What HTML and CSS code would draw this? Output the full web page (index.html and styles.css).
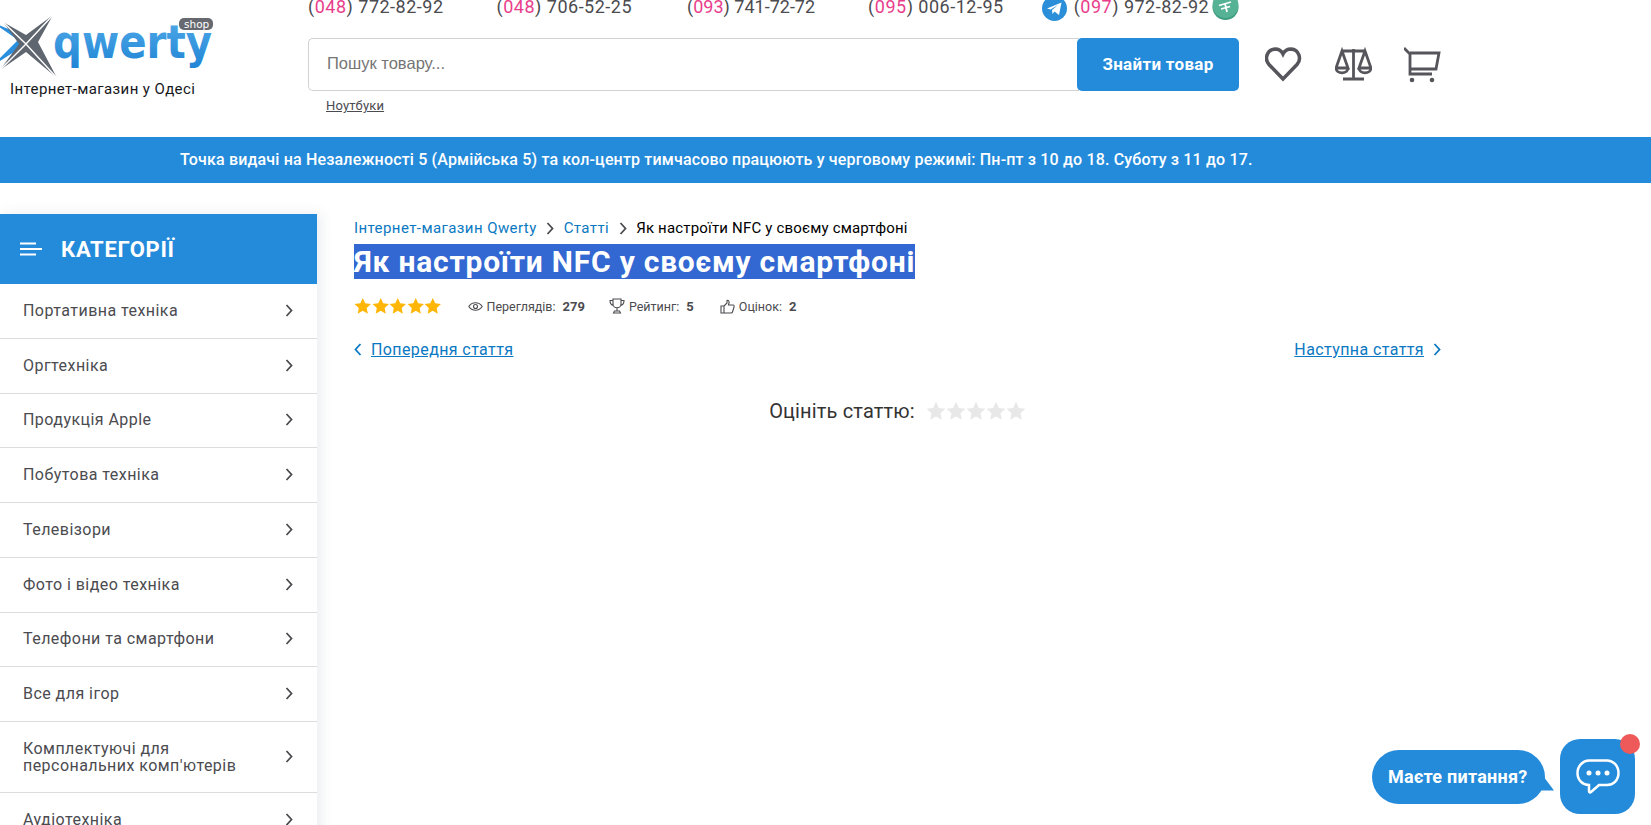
FILE: index.html
```html
<!DOCTYPE html>
<html lang="uk">

	<head>
		<meta charset="UTF-8" />
		<meta name="viewport" content="width=device-width, initial-scale=1.0" />
		<title>Як настроїти NFC у своєму смартфоні</title>
		<link rel="stylesheet" href="styles.css">
	</head>

	<body>
		<svg class="defs" width="0" height="0">
			<defs>
				<linearGradient id="logoBlue" x1="0" y1="0" x2="0" y2="1">
					<stop offset="0" stop-color="#55ace9" />
					<stop offset="1" stop-color="#1f85d5" />
				</linearGradient>
				<path id="star" d="M10 .8l2.8 6.1 6.6.8-4.9 4.5 1.3 6.6L10 15.5l-5.8 3.3 1.3-6.6L.6 7.7l6.6-.8z" />
				<path id="chev" d="M1.5 1l5 5.5-5 5.5" />
			</defs>
		</svg>

		<header class="header">
			<div class="logo">
				<svg class="logo-img" width="222" height="80" viewBox="0 0 222 80">
					<path d="M-8 22L18 40 -8 66 14 52 27 44 20 34z" fill="#2a8fdc" />
					<path d="M3 22L26 35 53 15 38 42 57 78 26 52 0 70 19 44z" fill="#5f6670" />
					<path d="M3 22L26 44 53 15M0 70L26 44 57 78" fill="none" stroke="#fff" stroke-width="1.5" />
					<text x="53" y="58" class="logo-word" fill="url(#logoBlue)" textLength="159" lengthAdjust="spacingAndGlyphs">qwerty</text>
					<rect x="179" y="18" width="34" height="12" rx="5" fill="#666a70" />
					<text x="184" y="27.500" class="logo-shop">shop</text>
				</svg>
				<div class="logo-sub">Інтернет-магазин у Одесі</div>
			</div>

			<div class="header-main">
				<div class="phones">
					<a class="phone">(<b>048</b>) 772-82-92</a>
					<a class="phone">(<b>048</b>) 706-52-25</a>
					<a class="phone phone-narrow">(<b>093</b>) 741-72-72</a>
					<a class="phone">(<b>095</b>) 006-12-95</a>
					<span class="phone-last">
						<svg class="tg" width="25" height="25" viewBox="0 0 25 25">
							<circle cx="12.500" cy="12.500" r="12.500" fill="#2a8fd8" />
							<path d="M5 12.500L19.500 6.500 17 19 12.500 15.500 10.500 18 10 14 16 9 8.500 13.500z" fill="#fff" />
						</svg>
						<a class="phone">(<b>097</b>) 972-82-92</a>
						<svg class="coin" width="27" height="20" viewBox="0 0 27 20">
							<circle cx="13.500" cy="7" r="13" fill="#3f9c80" />
							<circle cx="13.500" cy="5" r="13" fill="#55b295" />
							<path d="M7 5.500l12-3.500M13 3.500l2 8.500M9 9l9-2.500" stroke="#fff" stroke-width="1.800" fill="none" />
						</svg>
					</span>
				</div>

				<div class="search-row">
					<form class="search">
						<input class="search-input" type="text" placeholder="Пошук товару...">
						<button class="search-btn" type="button">Знайти товар</button>
					</form>
					<div class="tools">
						<svg width="37" height="37" viewBox="0 0 37 37" class="tool">
							<path d="M18 33L4 18.500C-1 13 2 3.500 10 3c3.500 0 6.500 2 8 5 1.500-3 4.500-5 8-5 8 .5 11 10 6 15.500z" />
						</svg>
						<svg width="37" height="37" viewBox="0 0 37 37" class="tool thin">
							<path d="M18.500 3v30M8 33h21M7 5h23M7 5L1 22h12zM30 5l-6 17h12z" />
							<path d="M1 22c.5 6.500 11.500 6.500 12 0M24 22c.5 6.500 11.500 6.500 12 0" />
						</svg>
						<svg width="37" height="37" viewBox="0 0 37 37" class="tool thin">
							<path d="M0 2l6 6v20h22" />
							<path d="M6 7h29l-3 16H6" />
							<circle cx="8" cy="34" r="2.300" class="dot" />
							<circle cx="28" cy="34" r="2.300" class="dot" />
						</svg>
					</div>
				</div>
				<a class="search-tag">Ноутбуки</a>
			</div>
		</header>

		<div class="notice">Точка видачі на Незалежності 5 (Армійська 5) та кол-центр тимчасово працюють у черговому режимі: Пн-пт з 10 до 18. Суботу з 11 до 17.</div>

		<div class="page">
			<aside class="sidebar">
				<div class="cat-head">
					<svg width="22" height="14" viewBox="0 0 22 14">
						<path d="M0 1.500h16M0 7h22M0 12.500h16" stroke="#fff" stroke-width="2" />
					</svg>
					<span>КАТЕГОРІЇ</span>
				</div>
				<ul class="cat-list">
					<li>Портативна техніка<svg class="chev" width="8" height="13"><use href="#chev" /></svg></li>
					<li>Оргтехніка<svg class="chev" width="8" height="13"><use href="#chev" /></svg></li>
					<li>Продукція Apple<svg class="chev" width="8" height="13"><use href="#chev" /></svg></li>
					<li>Побутова техніка<svg class="chev" width="8" height="13"><use href="#chev" /></svg></li>
					<li>Телевізори<svg class="chev" width="8" height="13"><use href="#chev" /></svg></li>
					<li>Фото і відео техніка<svg class="chev" width="8" height="13"><use href="#chev" /></svg></li>
					<li>Телефони та смартфони<svg class="chev" width="8" height="13"><use href="#chev" /></svg></li>
					<li>Все для ігор<svg class="chev" width="8" height="13"><use href="#chev" /></svg></li>
					<li class="tall">Комплектуючі для<br>персональних комп'ютерів<svg class="chev" width="8" height="13"><use href="#chev" /></svg></li>
					<li>Аудіотехніка<svg class="chev" width="8" height="13"><use href="#chev" /></svg></li>
				</ul>
			</aside>

			<main class="content">
				<div class="crumbs">
					<a>Інтернет-магазин Qwerty</a>
					<svg class="chev" width="8" height="13"><use href="#chev" /></svg>
					<a>Статті</a>
					<svg class="chev" width="8" height="13"><use href="#chev" /></svg>
					<span>Як настроїти NFC у своєму смартфоні</span>
				</div>
				<h1 class="title"><span>Як настроїти NFC у своєму смартфоні</span></h1>

				<div class="meta">
					<div class="stars">
						<svg width="17.500" height="18" viewBox="0 0 20 20"><use href="#star" /></svg>
						<svg width="17.500" height="18" viewBox="0 0 20 20"><use href="#star" /></svg>
						<svg width="17.500" height="18" viewBox="0 0 20 20"><use href="#star" /></svg>
						<svg width="17.500" height="18" viewBox="0 0 20 20"><use href="#star" /></svg>
						<svg width="17.500" height="18" viewBox="0 0 20 20"><use href="#star" /></svg>
					</div>
					<div class="meta-item views">
						<svg width="15" height="15" viewBox="0 0 15 15" class="meta-ico">
							<path d="M.8 7.500C4 2.500 11 2.500 14.200 7.500 11 12.500 4 12.500.8 7.500z" />
							<circle cx="7.500" cy="7.500" r="2" />
						</svg>
						Переглядів: <b>279</b>
					</div>
					<div class="meta-item rating">
						<svg width="16" height="16" viewBox="0 0 16 16" class="meta-ico">
							<path d="M4 1h8v5c0 5-8 5-8 0zM4 2.500H1c0 3 1 4.500 3.500 5M12 2.500h3c0 3-1 4.500-3.500 5M8 10v3M4.500 15h7l-1-2h-5z" />
						</svg>
						Рейтинг: <b>5</b>
					</div>
					<div class="meta-item likes">
						<svg width="15" height="15" viewBox="0 0 15 15" class="meta-ico">
							<path d="M1 7h3v7H1zM4 7l3-3V1.500c1.500-.5 2.500 1 2 2.500L8.500 6H13c1 0 1.500 1 1 2l-1.500 5c-.2.7-.8 1-1.500 1H4" />
						</svg>
						Оцінок: <b>2</b>
					</div>
				</div>

				<div class="pager">
					<a class="pager-link"><svg class="chev flip" width="8" height="13"><use href="#chev" /></svg><u>Попередня стаття</u></a>
					<a class="pager-link"><u>Наступна стаття</u><svg class="chev" width="8" height="13"><use href="#chev" /></svg></a>
				</div>

				<div class="rate">
					Оцініть статтю:
					<div class="rate-stars">
						<svg width="20" height="20" viewBox="0 0 20 20"><use href="#star" /></svg>
						<svg width="20" height="20" viewBox="0 0 20 20"><use href="#star" /></svg>
						<svg width="20" height="20" viewBox="0 0 20 20"><use href="#star" /></svg>
						<svg width="20" height="20" viewBox="0 0 20 20"><use href="#star" /></svg>
						<svg width="20" height="20" viewBox="0 0 20 20"><use href="#star" /></svg>
					</div>
				</div>
			</main>
		</div>

		<div class="chat">
			<div class="chat-bubble">Маєте питання?</div>
			<div class="chat-btn">
				<svg width="44" height="36" viewBox="0 0 44 36">
					<path d="M13 1.500h18c6 0 11.500 5 11.500 12.500S37 26 31 26h-8l-8 7c-1 .8-2 .3-2-1v-6C6.500 26 1.500 21 1.500 14S7 1.500 13 1.500z" />
					<circle cx="13" cy="14" r="2.500" />
					<circle cx="22" cy="14" r="2.500" />
					<circle cx="31" cy="14" r="2.500" />
				</svg>
				<span class="chat-dot"></span>
			</div>
		</div>
	</body>

</html>
```

FILE: styles.css
```css
html,
body {
	height: 825px;
	overflow: hidden;
}

body {
	margin: 0;
	font-family: Roboto, "Liberation Sans", sans-serif;
	color: #4b4b50;
	background: #fff;
}

a {
	text-decoration: none;
}

.defs {
	display: block;
}

.header {
	display: flex;
	height: 137px;
}

.logo {
	width: 308px;
	flex: none;
}

.logo-img {
	display: block;
}

.logo-word {
	font: 700 47px "DejaVu Sans", sans-serif;
}

.logo-shop {
	font: 10.500px "DejaVu Sans", sans-serif;
	fill: #fff;
}

.logo-sub {
	margin: 0 0 0 10px;
	font-size: 15px;
	letter-spacing: .4px;
	color: #16181c;
}

.phones {
	display: flex;
	align-items: center;
	gap: 53px;
	height: 14px;
	line-height: 14px;
	font-size: 18px;
	letter-spacing: .5px;
}

.phone {
	color: #4b4b50;
}

.phone b {
	font-weight: 400;
	color: #e83e8c;
}

.phone-narrow {
	margin-left: 2px;
	letter-spacing: 0;
}

.phone-last {
	display: flex;
	align-items: center;
	gap: 7px;
	margin-left: -15px;
}

.tg {
	margin-top: 3px;
}

.coin {
	margin: 6px 0 0 -4px;
}

.search-row {
	display: flex;
	align-items: center;
	margin-top: 24px;
}

.search {
	display: flex;
	width: 931px;
	height: 53px;
}

.search-input {
	flex: 1;
	min-width: 0;
	padding: 0 18px 2px;
	border: 1px solid #d2d2d2;
	border-right: 0;
	border-radius: 5px 0 0 5px;
	font: 16.500px "Liberation Sans", sans-serif;
}

.search-input::placeholder {
	color: #757575;
}

.search-btn {
	width: 162px;
	padding: 0 0 2px;
	border: 0;
	border-radius: 5px;
	margin-left: -2px;
	background: #248bdb;
	color: #fff;
	font: 700 17px Roboto, sans-serif;
	letter-spacing: .3px;
}

.tools {
	display: flex;
	gap: 32.500px;
	margin: -1px 0 0 26px;
}

.tool {
	display: block;
	fill: none;
	stroke: #55555b;
	stroke-width: 3.500;
}

.tool.thin {
	stroke-width: 2.800;
}

.tool .dot {
	fill: #55555b;
	stroke: none;
}

.search-tag {
	display: block;
	margin: 7px 0 0 18px;
	font-size: 13px;
	letter-spacing: .15px;
	color: #4b4b50;
	text-decoration: underline;
}

.notice {
	height: 46px;
	padding-left: 180px;
	line-height: 46px;
	background: #248bdb;
	color: #fff;
	font-size: 16px;
	font-weight: 500;
	letter-spacing: .165px;
}

.page {
	display: flex;
	margin-top: 31px;
}

.sidebar {
	width: 317px;
	flex: none;
	box-shadow: 4px 0 12px rgba(60, 80, 120, .1);
}

.cat-head {
	display: flex;
	align-items: center;
	gap: 19px;
	height: 70px;
	padding-left: 20px;
	background: #248bdb;
	color: #fff;
	font-size: 22px;
	font-weight: 700;
	letter-spacing: .7px;
}

.cat-list {
	margin: 0;
	padding: 0 0 0;
	list-style: none;
}

.cat-list li {
	display: flex;
	position: relative;
	align-items: center;
	box-sizing: border-box;
	height: 54.750px;
	padding: 0 0 1px 23px;
	border-bottom: 1px solid #dcdcdc;
	font-size: 16px;
	letter-spacing: .45px;
	line-height: 17px;
}

.cat-list li.tall {
	height: 71px;
}

.cat-list .chev {
	position: absolute;
	right: 24px;
	top: 50%;
	margin-top: -7px;
}

.chev {
	fill: none;
	stroke: #4b4b50;
	stroke-width: 1.800;
	flex: none;
}

.content {
	width: 1087px;
	padding-left: 37px;
}

.crumbs {
	display: flex;
	align-items: center;
	gap: 9.500px;
	margin-top: 5px;
	font-size: 15px;
	letter-spacing: .18px;
	color: #000;
}

.crumbs a {
	color: #0a78c2;
	letter-spacing: .42px;
}

.title {
	margin: 7px 0 0;
	font-size: 30px;
	font-weight: 700;
	line-height: 36px;
	letter-spacing: .77px;
}

.title span {
	background: #3367d1;
	color: #fff;
}

.meta {
	display: flex;
	align-items: center;
	margin-top: 17px;
	font-size: 12.500px;
	height: 18px;
}

.stars {
	display: flex;
	fill: #ffb606;
}

.meta-item {
	display: flex;
	align-items: center;
	gap: 4px;
}

.meta-item b {
	margin-left: 3px;
	font-size: 13px;
}

.meta-ico {
	fill: none;
	stroke: #4b4b50;
	stroke-width: 1.100;
}

.views {
	margin-left: 26px;
}

.rating {
	margin-left: 24px;
}

.likes {
	margin-left: 26px;
}

.pager {
	display: flex;
	justify-content: space-between;
	margin-top: 25px;
	font-size: 16px;
	letter-spacing: .4px;
}

.pager-link {
	display: flex;
	align-items: center;
	gap: 9px;
	color: #0a78c2;
}

.pager-link .chev {
	stroke: #0a78c2;
}

.flip {
	transform: scaleX(-1);
}

.rate {
	display: flex;
	align-items: center;
	justify-content: center;
	gap: 11px;
	margin-top: 40px;
	font-size: 20px;
	letter-spacing: .15px;
	color: #333;
}

.rate-stars {
	display: flex;
	fill: #e8e8e8;
}

.chat {
	position: fixed;
	left: 1372px;
	top: 739px;
	display: flex;
	align-items: center;
}

.chat-bubble {
	position: relative;
	box-sizing: border-box;
	width: 173px;
	height: 54px;
	padding-left: 16px;
	border-radius: 27px;
	background: #248bdb;
	color: #fff;
	font-size: 18px;
	font-weight: 700;
	letter-spacing: .25px;
	line-height: 54px;
}

.chat-bubble::after {
	content: "";
	position: absolute;
	left: 158px;
	bottom: 13px;
	width: 24px;
	height: 32px;
	background: #248bdb;
	clip-path: polygon(0 0, 100% 100%, 0 100%);
}

.chat-btn {
	position: relative;
	display: flex;
	align-items: center;
	justify-content: center;
	width: 75px;
	height: 75px;
	margin-left: 15px;
	border-radius: 20px;
	background: #248bdb;
}

.chat-btn svg {
	fill: none;
	stroke: #fff;
	stroke-width: 2.500;
}

.chat-btn circle {
	fill: #fff;
	stroke: none;
}

.chat-dot {
	position: absolute;
	top: -5px;
	right: -5px;
	width: 20px;
	height: 20px;
	border-radius: 50%;
	background: #ee5a5a;
}
```
